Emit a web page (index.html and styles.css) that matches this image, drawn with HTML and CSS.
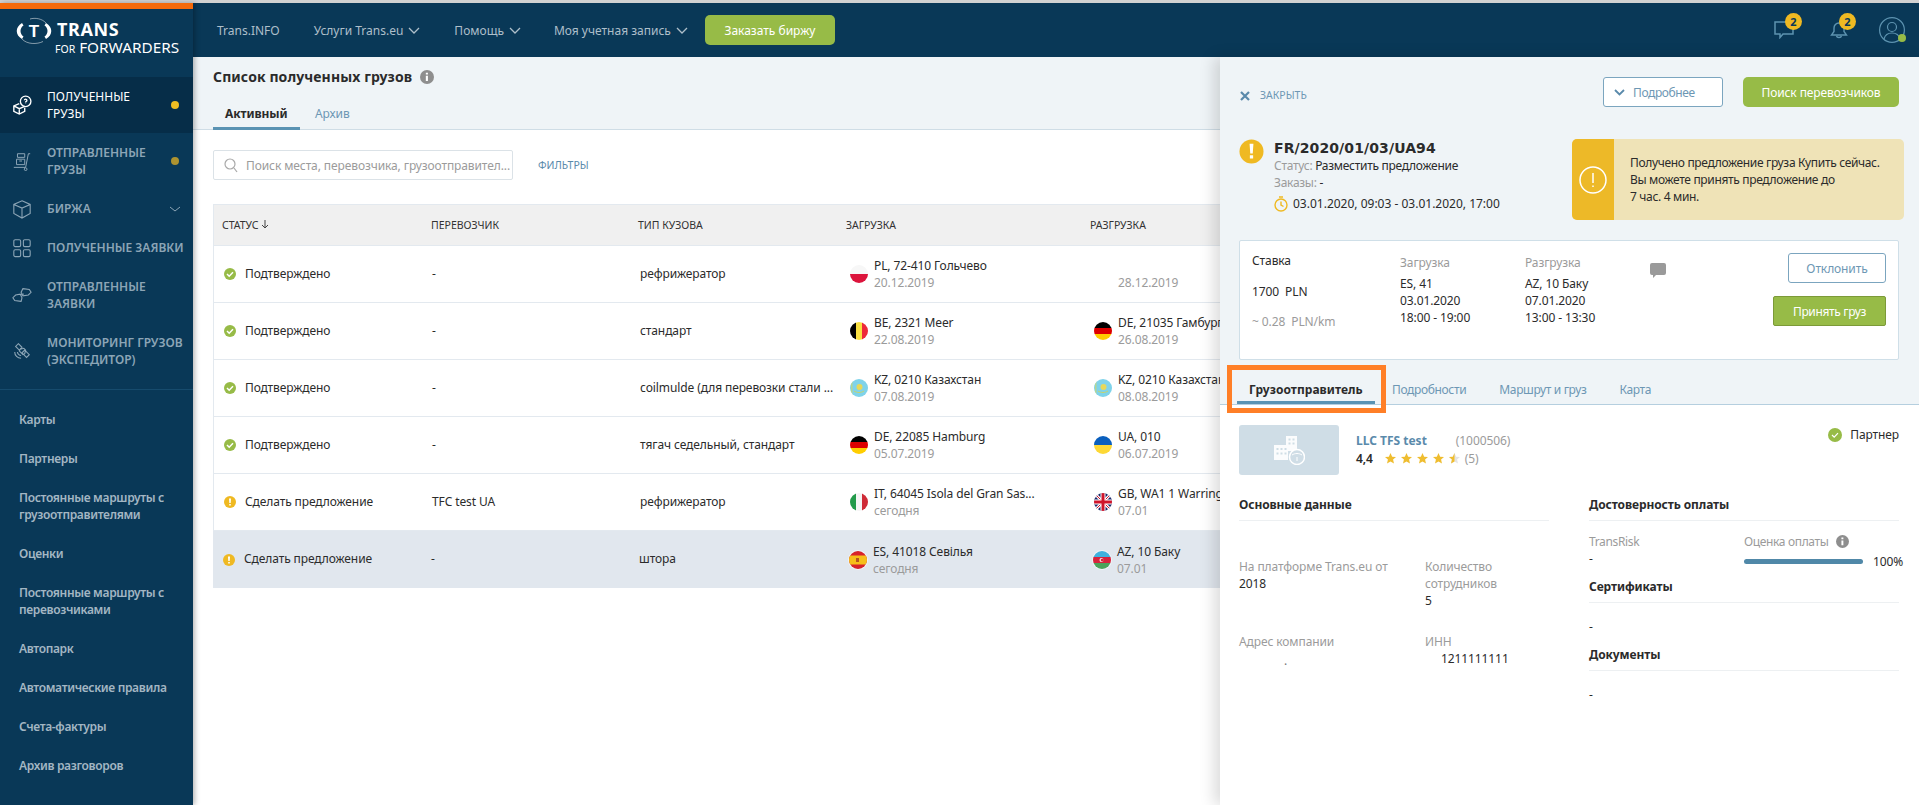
FILE: index.html
```html
<!DOCTYPE html>
<html lang="ru">
<head>
<meta charset="utf-8">
<title>Trans for Forwarders</title>
<link rel="stylesheet" href="styles.css">
</head>
<body>
<div class="app">
  <aside class="sidebar">
    <div class="logo">
      <svg class="logo-mark" width="46" height="40" viewBox="0 0 46 40"><path d="M9 14C2 18 2 26 9 30L10.500 27.500C6.500 25 6.500 19 10.500 16.500Z" fill="#fff"/><path d="M33 14C40 18 40 26 33 30L31.500 27.500C35.500 25 35.500 19 31.500 16.500Z" fill="#fff"/><path d="M9 30C14 35.500 24 35.500 30 32.500M33 14C29 9.500 22 8.500 17 10" fill="none" stroke="#fff" stroke-width=".5"/><text x="21" y="28" text-anchor="middle" class="logo-t">T</text></svg>
      <div class="logo-text"><div class="logo-trans">TRANS</div><div class="logo-for"><span class="logo-small">FOR</span> FORWARDERS</div></div>
    </div>
    <nav class="nav-main">
      <a class="nav-item active"><svg class="nav-ico" viewBox="0 0 22 22" fill="none" stroke="currentColor" stroke-width="1.500"><circle cx="15" cy="7" r="5.800"/><path d="M13.600 5.800a1.400 1.400 0 1 1 1.900 1.500c-.4.200-.6.500-.6 1M14.900 9.500v.4"/><path d="M8 9.500 2 12v6l6 3 6-3v-4M2 12l6 3 6-2.500M8 15v6"/></svg><span>ПОЛУЧЕННЫЕ<br>ГРУЗЫ</span><i class="dot"></i></a>
      <a class="nav-item"><svg class="nav-ico" viewBox="0 0 22 22" fill="none" stroke="currentColor" stroke-width="1.100"><path d="M20 3h-2l-3 15H2M6 3h8v4H6zM5 9h9v6H5zM8 11h3"/><circle cx="15" cy="20" r="1.500"/></svg><span>ОТПРАВЛЕННЫЕ<br>ГРУЗЫ</span><i class="dot dim"></i></a>
      <a class="nav-item single"><svg class="nav-ico" viewBox="0 0 22 22" fill="none" stroke="currentColor" stroke-width="1.200"><path d="M11 2 20 6v10l-9 5-9-5V6zM2 6l9 4 9-4M11 10v11"/></svg><span>БИРЖА</span><svg class="nav-chev" width="12" height="6" viewBox="0 0 12 6" fill="none" stroke="currentColor"><path d="m1 1 5 4 5-4"/></svg></a>
      <a class="nav-item single"><svg class="nav-ico" viewBox="0 0 22 22" fill="none" stroke="currentColor" stroke-width="1.200"><rect x="2" y="2" width="7.500" height="7.500" rx="1.500"/><rect x="12.500" y="2" width="7.500" height="7.500" rx="1.500"/><rect x="2" y="13" width="7.500" height="7.500" rx="1.500"/><rect x="12.500" y="13" width="7.500" height="7.500" rx="1.500"/></svg><span>ПОЛУЧЕННЫЕ ЗАЯВКИ</span></a>
      <a class="nav-item"><svg class="nav-ico" viewBox="0 0 22 22" fill="none" stroke="currentColor" stroke-width="1.200"><path d="m12 4 7 1 2 3-3 3-6 1-2-4zM10 18l-7-1-2-3 3-3 5-1 2 4zM9 11l4-1"/></svg><span>ОТПРАВЛЕННЫЕ<br>ЗАЯВКИ</span></a>
      <a class="nav-item"><svg class="nav-ico" viewBox="0 0 22 22" fill="none" stroke="currentColor" stroke-width="1.200"><path d="m7 3 4 4-3 3-4-4zM14 10l5 5-3 3-5-5zM9 9l4-1 2 2-1 4-2 1-4-4zM3 12c0 4 3 7 7 7M6 12c0 2 2 4 4 4"/></svg><span>МОНИТОРИНГ ГРУЗОВ<br>(ЭКСПЕДИТОР)</span></a>
    </nav>
    <nav class="nav-sub">
      <a>Карты</a>
      <a>Партнеры</a>
      <a>Постоянные маршруты с грузоотправителями</a>
      <a>Оценки</a>
      <a>Постоянные маршруты с перевозчиками</a>
      <a>Автопарк</a>
      <a>Автоматические правила</a>
      <a>Счета-фактуры</a>
      <a>Архив разговоров</a>
    </nav>
  </aside>

  <div class="main">
    <header class="topbar">
      <a class="top-link">Trans.INFO</a>
      <a class="top-link">Услуги Trans.eu <svg class="chev" width="12" height="7" viewBox="0 0 12 7" fill="none" stroke="currentColor" stroke-width="1.300"><path d="m1 1 5 5 5-5"/></svg></a>
      <a class="top-link">Помощь <svg class="chev" width="12" height="7" viewBox="0 0 12 7" fill="none" stroke="currentColor" stroke-width="1.300"><path d="m1 1 5 5 5-5"/></svg></a>
      <a class="top-link">Моя учетная запись <svg class="chev" width="12" height="7" viewBox="0 0 12 7" fill="none" stroke="currentColor" stroke-width="1.300"><path d="m1 1 5 5 5-5"/></svg></a>
      <button class="btn-order">Заказать биржу</button>
      <div class="top-icons">
        <div class="top-ico chat"><svg width="20" height="18" viewBox="0 0 20 18" fill="none" stroke="#5d93b0" stroke-width="1.500"><path d="M1 1h18v12H9l-3 3.500V13H1z"/></svg><b class="badge">2</b></div>
        <div class="top-ico bell"><svg width="18" height="18" viewBox="0 0 18 18" fill="none" stroke="#5d93b0" stroke-width="1.400"><path d="M9 2C6 2 4 4.500 4 7v3.500L1.500 14h15L14 10.500V7c0-2.500-2-5-5-5zM6.500 15c.5 2 4.500 2 5 0"/></svg><b class="badge">2</b></div>
        <div class="avatar"><svg width="26" height="26" viewBox="0 0 26 26" fill="none" stroke="#5d93b0" stroke-width="1.200"><circle cx="13" cy="13" r="12.400"/><circle cx="13" cy="10" r="4.500"/><path d="M5 22c1-4 4-6 8-6s7 2 8 6"/></svg><i class="online"></i></div>
      </div>
    </header>

    <section class="content-head">
      <h1 class="page-title">Список полученных грузов <svg class="info" width="14" height="14" viewBox="0 0 12 12"><circle cx="6" cy="6" r="6" fill="#8e8e8e"/><path d="M5 5h1.800v4.500H5zM5 2.300h1.800v1.600H5z" fill="#fff"/></svg></h1>
      <div class="page-tabs"><a class="page-tab on">Активный</a><a class="page-tab">Архив</a></div>
    </section>

    <section class="list">
      <div class="toolbar">
        <div class="search"><svg width="14" height="15" viewBox="0 0 14 15" fill="none" stroke="#a9a9a9" stroke-width="1.200"><circle cx="6" cy="6" r="5"/><path d="m10 10 3 4"/></svg><span>Поиск места, перевозчика, грузоотправител...</span></div>
        <a class="filters">ФИЛЬТРЫ</a>
      </div>
      <div class="table">
        <div class="tr th"><div>СТАТУС <svg width="8" height="9" viewBox="0 0 8 9" fill="none" stroke="#444"><path d="M4 0v8M1 5l3 3 3-3"/></svg></div><div>ПЕРЕВОЗЧИК</div><div>ТИП КУЗОВА</div><div>ЗАГРУЗКА</div><div>РАЗГРУЗКА</div></div>

        <div class="tr">
          <div class="st"><svg class="st-ico" viewBox="0 0 12 12"><circle cx="6" cy="6" r="6" fill="#97bb47"/><path d="m3 6 2.200 2.200L9 4.200" fill="none" stroke="#fff" stroke-width="1.500"/></svg>Подтверждено</div><div class="cell">-</div><div class="cell">рефрижератор</div>
          <div class="loc"><svg class="flag" viewBox="0 0 18 18"><rect width="18" height="9" fill="#f7f7f7"/><rect y="9" width="18" height="9" fill="#dc143c"/></svg><p>PL, 72-410 Гольчево<small>20.12.2019</small></p></div>
          <div class="loc"><span class="flag none"></span><p>&nbsp;<small>28.12.2019</small></p></div>
        </div>
        <div class="tr">
          <div class="st"><svg class="st-ico" viewBox="0 0 12 12"><circle cx="6" cy="6" r="6" fill="#97bb47"/><path d="m3 6 2.200 2.200L9 4.200" fill="none" stroke="#fff" stroke-width="1.500"/></svg>Подтверждено</div><div class="cell">-</div><div class="cell">стандарт</div>
          <div class="loc"><svg class="flag" viewBox="0 0 18 18"><rect width="6" height="18" fill="#000"/><rect x="6" width="6" height="18" fill="#fae042"/><rect x="12" width="6" height="18" fill="#ed2939"/></svg><p>BE, 2321 Meer<small>22.08.2019</small></p></div>
          <div class="loc"><svg class="flag" viewBox="0 0 18 18"><rect width="18" height="6" fill="#000"/><rect y="6" width="18" height="6" fill="#d00"/><rect y="12" width="18" height="6" fill="#ffce00"/></svg><p>DE, 21035 Гамбург<small>26.08.2019</small></p></div>
        </div>
        <div class="tr">
          <div class="st"><svg class="st-ico" viewBox="0 0 12 12"><circle cx="6" cy="6" r="6" fill="#97bb47"/><path d="m3 6 2.200 2.200L9 4.200" fill="none" stroke="#fff" stroke-width="1.500"/></svg>Подтверждено</div><div class="cell">-</div><div class="cell">coilmulde (для перевозки стали ...</div>
          <div class="loc"><svg class="flag" viewBox="0 0 18 18"><rect width="18" height="18" fill="#7fd3ea"/><circle cx="9.500" cy="8" r="3" fill="#e6d85a"/><path d="M4 12c3 2 7 2 10 0" stroke="#c9d46a" fill="none"/><rect x="1" width="1.500" height="18" fill="#b5d694"/></svg><p>KZ, 0210 Казахстан<small>07.08.2019</small></p></div>
          <div class="loc"><svg class="flag" viewBox="0 0 18 18"><rect width="18" height="18" fill="#7fd3ea"/><circle cx="9.500" cy="8" r="3" fill="#e6d85a"/><path d="M4 12c3 2 7 2 10 0" stroke="#c9d46a" fill="none"/><rect x="1" width="1.500" height="18" fill="#b5d694"/></svg><p>KZ, 0210 Казахстан<small>08.08.2019</small></p></div>
        </div>
        <div class="tr">
          <div class="st"><svg class="st-ico" viewBox="0 0 12 12"><circle cx="6" cy="6" r="6" fill="#97bb47"/><path d="m3 6 2.200 2.200L9 4.200" fill="none" stroke="#fff" stroke-width="1.500"/></svg>Подтверждено</div><div class="cell">-</div><div class="cell">тягач седельный, стандарт</div>
          <div class="loc"><svg class="flag" viewBox="0 0 18 18"><rect width="18" height="6" fill="#000"/><rect y="6" width="18" height="6" fill="#d00"/><rect y="12" width="18" height="6" fill="#ffce00"/></svg><p>DE, 22085 Hamburg<small>05.07.2019</small></p></div>
          <div class="loc"><svg class="flag" viewBox="0 0 18 18"><rect width="18" height="9" fill="#0a5fbd"/><rect y="9" width="18" height="9" fill="#fdd835"/></svg><p>UA, 010<small>06.07.2019</small></p></div>
        </div>
        <div class="tr">
          <div class="st"><svg class="st-ico" viewBox="0 0 12 12"><circle cx="6" cy="6" r="6" fill="#efb922"/><path d="M5 2.500h2L6.700 7H5.300zM5.200 8h1.600v1.600H5.200z" fill="#fff"/></svg>Сделать предложение</div><div class="cell">TFC test UA</div><div class="cell">рефрижератор</div>
          <div class="loc"><svg class="flag" viewBox="0 0 18 18"><rect width="6" height="18" fill="#229a4a"/><rect x="6" width="6" height="18" fill="#f5f5f5"/><rect x="12" width="6" height="18" fill="#cf2b37"/></svg><p>IT, 64045 Isola del Gran Sas...<small>сегодня</small></p></div>
          <div class="loc"><svg class="flag" viewBox="0 0 18 18"><rect width="18" height="18" fill="#1c2a6b"/><path d="M0 0 18 18M18 0 0 18" stroke="#fff" stroke-width="3"/><path d="M0 0 18 18M18 0 0 18" stroke="#cf142b"/><path d="M9 0v18M0 9h18" stroke="#fff" stroke-width="5"/><path d="M9 0v18M0 9h18" stroke="#cf142b" stroke-width="3"/></svg><p>GB, WA1 1 Warrington<small>07.01</small></p></div>
        </div>
        <div class="tr sel">
          <div class="st"><svg class="st-ico" viewBox="0 0 12 12"><circle cx="6" cy="6" r="6" fill="#efb922"/><path d="M5 2.500h2L6.700 7H5.300zM5.200 8h1.600v1.600H5.200z" fill="#fff"/></svg>Сделать предложение</div><div class="cell">-</div><div class="cell">штора</div>
          <div class="loc"><svg class="flag" viewBox="0 0 18 18"><rect width="18" height="18" fill="#d8232a"/><rect y="4.500" width="18" height="9" fill="#f6bf1a"/><rect x="7" y="7" width="3" height="4" fill="#b5561f"/></svg><p>ES, 41018 Севілья<small>сегодня</small></p></div>
          <div class="loc"><svg class="flag" viewBox="0 0 18 18"><rect width="18" height="6" fill="#3fb2de"/><rect y="6" width="18" height="6" fill="#d8233c"/><rect y="12" width="18" height="6" fill="#4ba35a"/><circle cx="8.500" cy="9" r="2" fill="#fff"/><circle cx="9.200" cy="9" r="1.600" fill="#d8233c"/></svg><p>AZ, 10 Баку<small>07.01</small></p></div>
        </div>
      </div>
    </section>

    <aside class="panel">
      <div class="panel-head">
        <div class="panel-actions">
          <a class="close"><svg width="10" height="10" viewBox="0 0 10 10" stroke="#5a8aab" stroke-width="2.200"><path d="m1 1 8 8M9 1 1 9"/></svg>ЗАКРЫТЬ</a>
          <div class="action-btns">
            <button class="btn-more"><svg width="11" height="7" viewBox="0 0 11 7" fill="none" stroke="#5a8aab" stroke-width="1.800"><path d="m1 1 4.500 4.500L10 1"/></svg>Подробнее</button>
            <button class="btn-green wide">Поиск перевозчиков</button>
          </div>
        </div>
        <div class="summary">
          <div class="order">
            <svg class="order-ico" viewBox="0 0 26 26"><circle cx="13" cy="13" r="12.500" fill="#efb922"/><path d="M11 5h4l-.7 10h-2.600zM11.300 17h3.400v3.400h-3.400z" fill="#fff"/></svg>
            <div class="order-info">
              <div class="order-no">FR/2020/01/03/UA94</div>
              <div class="order-row"><span class="mute">Статус:</span> Разместить предложение</div>
              <div class="order-row"><span class="mute">Заказы:</span> -</div>
              <div class="order-time"><svg width="14" height="16" viewBox="0 0 14 16" fill="none" stroke="#efb922" stroke-width="1.400"><circle cx="7" cy="9" r="6"/><path d="M7 5.500V9l2.500 1.500M5 1h4"/></svg>03.01.2020, 09:03 - 03.01.2020, 17:00</div>
            </div>
          </div>
          <div class="notice">
            <div class="notice-ico"><svg width="28" height="28" viewBox="0 0 28 28" fill="none" stroke="#fff" stroke-width="1.500"><circle cx="14" cy="14" r="13"/><path d="M14 7v10M14 19.500v1.500"/></svg></div>
            <p>Получено предложение груза Купить сейчас.<br>Вы можете принять предложение до<br>7 час. 4 мин.</p>
          </div>
        </div>
        <div class="offer">
          <div class="rate"><div>Ставка</div><div class="rate-val">1700&nbsp; PLN</div><div class="mute rate-km">~ 0.28&nbsp; PLN/km</div></div>
          <div class="stop"><div class="mute stop-l">Загрузка</div>ES, 41<br>03.01.2020<br>18:00 - 19:00</div>
          <div class="stop"><div class="mute stop-l">Разгрузка</div>AZ, 10 Баку<br>07.01.2020<br>13:00 - 13:30</div>
          <svg class="comment" width="16" height="15" viewBox="0 0 16 15"><path d="M2 0h12a2 2 0 0 1 2 2v8a2 2 0 0 1-2 2H6l-3 3v-3H2a2 2 0 0 1-2-2V2a2 2 0 0 1 2-2z" fill="#9a9a9a"/></svg>
          <div class="offer-btns"><button class="btn-reject">Отклонить</button><button class="btn-green accept">Принять груз</button></div>
        </div>
        <div class="tabs">
          <a class="tab on">Грузоотправитель</a><a class="tab">Подробности</a><a class="tab">Маршрут и груз</a><a class="tab">Карта</a>
          <span class="highlight"></span>
        </div>
      </div>
      <div class="panel-body">
        <div class="company">
          <div class="co-logo"><svg width="32" height="30" viewBox="0 0 32 30"><path d="M13 1h11v15h-11zM1 10h14v15H1z" fill="#fff" opacity=".9"/><g fill="#cfdde6"><path d="M15.500 3.500h2v2h-2zM19.500 3.500h2v2h-2zM15.500 7.500h2v2h-2zM19.500 7.500h2v2h-2zM3.500 13h2v2h-2zM7.500 13h2v2h-2zM11.500 13h2v2h-2zM3.500 17.500h2v2h-2zM7.500 17.500h2v2h-2zM11.500 17.500h2v2h-2z"/></g><circle cx="24" cy="22" r="7.500" fill="#cfdde6" stroke="#fff" stroke-width="1.500"/><path d="M19 20c3-2 7-2 10 0M24 22v4" stroke="#fff" fill="none"/></svg></div>
          <div class="co-info">
            <div class="co-name"><b>LLC TFS test</b><span>(1000506)</span></div>
            <div class="co-rate"><b>4,4</b><span class="stars"><svg viewBox="0 0 12 12"><path d="m6 0 1.800 4 4.200.4-3.200 2.800 1 4.300L6 9.200 2.200 11.500l1-4.300L0 4.400 4.200 4z"/></svg><svg viewBox="0 0 12 12"><path d="m6 0 1.800 4 4.200.4-3.200 2.800 1 4.300L6 9.200 2.200 11.500l1-4.300L0 4.400 4.200 4z"/></svg><svg viewBox="0 0 12 12"><path d="m6 0 1.800 4 4.200.4-3.200 2.800 1 4.300L6 9.200 2.200 11.500l1-4.300L0 4.400 4.200 4z"/></svg><svg viewBox="0 0 12 12"><path d="m6 0 1.800 4 4.200.4-3.200 2.800 1 4.300L6 9.200 2.200 11.500l1-4.300L0 4.400 4.200 4z"/></svg><svg viewBox="0 0 12 12"><path d="m6 0 1.800 4 4.200.4-3.200 2.800 1 4.300L6 9.200 2.200 11.500l1-4.300L0 4.400 4.200 4z" fill="#e4e4e4"/><path d="M6 0v9.200L2.200 11.500l1-4.300L0 4.400 4.200 4z"/></svg></span><span class="mute">(5)</span></div>
          </div>
          <div class="partner"><svg width="14" height="14" viewBox="0 0 14 14"><circle cx="7" cy="7" r="7" fill="#97bb47"/><path d="m4 7 2.200 2.200L10 5.200" fill="none" stroke="#fff" stroke-width="1.200"/></svg>Партнер</div>
        </div>
        <div class="cols">
          <div class="col">
            <h3>Основные данные</h3>
            <div class="facts">
              <div><div class="mute">На платформе Trans.eu от</div>2018</div>
              <div><div class="mute">Количество сотрудников</div>5</div>
              <div><div class="mute">Адрес компании</div><div class="addr">.</div></div>
              <div><div class="mute">ИНН</div><div class="inn">1211111111</div></div>
            </div>
          </div>
          <div class="col">
            <h3>Достоверность оплаты</h3>
            <div class="risk">
              <div><div class="mute">TransRisk</div>-</div>
              <div><div class="mute">Оценка оплаты <svg class="info" width="13" height="13" viewBox="0 0 12 12"><circle cx="6" cy="6" r="6" fill="#8e8e8e"/><path d="M5 5h1.800v4.500H5zM5 2.300h1.800v1.600H5z" fill="#fff"/></svg></div><div class="meter"><span class="meter-bar"></span><span class="meter-val">100%</span></div></div>
            </div>
            <h3 class="next">Сертификаты</h3>
            <div class="plain">-</div>
            <h3 class="next">Документы</h3>
            <div class="plain">-</div>
          </div>
        </div>
      </div>
    </aside>
  </div>
</div>
</body>
</html>
```
FILE: styles.css
```css
* { box-sizing: border-box; }
html, body { margin: 0; height: 100%; overflow: hidden; }
body { font: 12px/17px "Noto Sans", "Liberation Sans", sans-serif; letter-spacing: -.1px; color: #2b2b2b; background: #fff; }
button { font: inherit; letter-spacing: inherit; cursor: pointer; }
p, h1, h3 { margin: 0; }
svg { flex: none; }
a { display: block; }

.app { display: flex; height: 805px; border-top: 3px solid #d2d2d2; }

/* sidebar */
.sidebar { width: 193px; flex: none; background: #093857; border-top: 6px solid #f56a0a; position: relative; z-index: 2; box-shadow: 2px 0 5px rgba(0,0,0,.28); }
.logo { height: 68px; display: flex; padding: 0 0 0 13px; }
.logo-mark { margin-right: -2px; }
.logo-t { font: bold 17px "Liberation Sans", sans-serif; fill: #fff; }
.logo-text { padding-top: 10px; color: #fff; letter-spacing: 0; }
.logo-trans { font: bold 18px/20px "Noto Sans", sans-serif; letter-spacing: .6px; }
.logo-for { font: 15.300px/16px "Noto Sans", sans-serif; white-space: nowrap; margin-left: -2px; }
.logo-small { font-size: 10.500px; }
.nav-main { border-bottom: 1px solid #164b6d; padding-bottom: 10px; }
.nav-item { position: relative; display: flex; align-items: center; padding: 11px 0 11px 47px; color: #8ca5b6; font-weight: 600; white-space: nowrap; letter-spacing: 0; }
.nav-item.active { background: #062d48; color: #fff; font-weight: 400; }
.nav-ico { position: absolute; left: 12px; top: 50%; margin-top: -10px; width: 20px; height: 20px; }
.dot { position: absolute; left: 171px; top: 50%; margin-top: -4px; width: 8px; height: 8px; border-radius: 50%; background: #efbd22; }
.dot.dim { background: #ad9330; }
.nav-chev { position: absolute; left: 169px; top: 17px; }
.nav-sub { padding-top: 10px; }
.nav-sub a { padding: 11px 0 11px 19px; color: #a3b6c3; font-weight: 600; letter-spacing: -.33px; }

/* top bar */
.main { flex: 1; min-width: 0; position: relative; display: flex; flex-direction: column; }
.topbar { height: 54px; flex: none; background: #093857; display: flex; align-items: center; padding-left: 24px; color: #aebfca; letter-spacing: 0; }
.top-link { margin-right: 34px; white-space: nowrap; display: flex; align-items: center; gap: 5px; }
.top-link:nth-child(4) { margin-left: -1px; }
.chev { margin-top: 1px; }
.btn-order { width: 130px; height: 30px; background: #97bb47; color: #fff; border: 0; border-radius: 5px; margin-left: -17px; }
.top-icons { margin-left: auto; display: flex; align-items: center; padding-right: 14px; }
.top-ico { position: relative; display: flex; }
.top-ico.chat { margin-right: 36px; }
.top-ico.bell { margin-right: 31px; }
.badge { position: absolute; right: -8px; top: -8px; width: 17px; height: 17px; border-radius: 50%; background: #efb922; color: #093857; font-size: 11px; line-height: 17px; text-align: center; }
.avatar { position: relative; display: flex; }
.online { position: absolute; right: -1px; bottom: 1px; width: 8px; height: 8px; border-radius: 50%; background: #97bb47; }

/* page header */
.content-head { height: 73px; flex: none; background: #eff4f7; border-bottom: 1px solid #cfdde6; padding: 11px 0 0 20px; }
.page-title { font-size: 14px; line-height: 18px; font-weight: 700; letter-spacing: .1px; color: #2b2b2b; display: flex; align-items: center; gap: 8px; }
.page-tabs { display: flex; margin-top: 19px; }
.page-tab { height: 25px; padding: 0 12px; color: #6d97b4; }
.page-tab.on { width: 87px; font-weight: 700; color: #2b2b2b; border-bottom: 3px solid #5a93b3; margin-right: 3px; }

/* list */
.list { flex: 1; padding: 20px 0 0 20px; overflow: hidden; }
.toolbar { display: flex; align-items: center; height: 30px; }
.search { width: 300px; height: 30px; border: 1px solid #dbe2e7; border-radius: 2px; display: flex; align-items: center; gap: 8px; padding-left: 10px; color: #9b9b9b; white-space: nowrap; overflow: hidden; }
.filters { margin-left: 25px; color: #5a8aab; font-size: 10.500px; letter-spacing: 0; }
.table { margin-top: 24px; }
.tr { display: grid; grid-template-columns: 208px 208px 206px 244px 400px; height: 57px; align-items: center; border-left: 1px solid #e3e9ef; border-bottom: 1px solid #e3e9ef; white-space: nowrap; }
.tr > div { overflow: hidden; }
.th { height: 42px; background: #f0f0f0; border-top: 1px solid #e3e9ef; font-size: 10.500px; color: #333; letter-spacing: 0; }
.th > div { padding-left: 8px; }
.th > div:nth-child(2) { padding-left: 9px; }
.th > div:nth-child(n+4) { padding-left: 10px; }
.sel { background: #e1e7ee; border: 0; }
.st { display: flex; align-items: center; padding: 0 0 2px 10px; gap: 9px; }
.st-ico { width: 12px; height: 12px; margin-top: 2px; }
.cell { padding: 0 0 2px 10px; overflow: hidden; text-overflow: ellipsis; }
.loc { display: flex; align-items: center; padding-left: 14px; }
.flag { width: 18px; height: 18px; border-radius: 50%; margin-right: 6px; box-shadow: 0 0 0 1px rgba(255,255,255,.55); }
.flag.none { box-shadow: none; }
.loc small { display: block; font-size: 12px; color: #9b9b9b; }

/* side panel */
.panel { position: absolute; z-index: 3; top: 54px; bottom: 0; right: 0; width: 699px; background: #fff; box-shadow: -6px 0 14px rgba(0,0,0,.14); }
.panel-head { height: 348px; background: #eff4f7; border-bottom: 1px solid #b5cfdf; padding: 20px 20px 0 19px; position: relative; }
.panel-actions { display: flex; justify-content: space-between; align-items: center; height: 30px; }
.close { display: flex; align-items: center; gap: 10px; color: #6d97b4; font-size: 10.500px; letter-spacing: 0; padding: 7px 0 0 1px; }
.action-btns { display: flex; gap: 20px; }
.btn-more { width: 120px; height: 30px; background: #fff; border: 1px solid #7ba5bf; border-radius: 3px; color: #6d97b4; display: flex; align-items: center; gap: 8px; padding: 0 0 0 10px; letter-spacing: -.4px; }
.btn-green { background: #97bb47; color: #fff; border: 0; border-radius: 5px; height: 30px; }
.btn-green.wide { width: 156px; }
.summary { display: flex; justify-content: space-between; margin: 32px -5px 20px 0; height: 81px; }
.order { display: flex; gap: 10px; }
.order-ico { width: 25px; height: 25px; }
.order-no { font: bold 14px/18px "DejaVu Sans", sans-serif; letter-spacing: .1px; }
.order-row { letter-spacing: -.28px; }
.mute { color: #9b9b9b; }
.order-time { display: flex; align-items: center; gap: 5px; margin-top: 4px; letter-spacing: 0; }
.notice { width: 332px; display: flex; background: #efe3b7; border-radius: 5px; overflow: hidden; }
.notice-ico { width: 42px; background: #edb928; display: flex; align-items: center; justify-content: center; }
.notice p { padding: 15px 0 0 16px; white-space: nowrap; letter-spacing: -.33px; }
.offer { height: 120px; background: #fff; border: 1px solid #cfdfe8; border-radius: 2px; display: flex; padding: 11px 12px 0 12px; position: relative; }
.rate { width: 148px; }
.rate-val { margin-top: 14px; }
.rate-km { margin-top: 13px; }
.stop { width: 125px; padding-top: 2px; }
.stop-l { margin-bottom: 4px; }
.comment { margin-top: 11px; }
.offer-btns { margin-left: auto; display: flex; flex-direction: column; align-items: flex-end; gap: 13px; margin-top: 1px; }
.btn-reject { width: 98px; height: 30px; background: #fff; border: 1px solid #7ba5bf; border-radius: 3px; color: #6d97b4; }
.accept { width: 113px; border-radius: 2px; border: 1px solid #7c9a38; letter-spacing: -.35px; }
.tabs { position: absolute; left: 17px; bottom: 0; display: flex; height: 38px; }
.tab { padding: 15px 12px 0; color: #6d97b4; margin-right: 9px; white-space: nowrap; letter-spacing: -.35px; }
.tab.on { font-weight: 700; letter-spacing: .05px; color: #2b2b2b; width: 138px; border-bottom: 3px solid #5a93b3; height: 38px; margin-right: 5px; }
.highlight { position: absolute; left: -10px; top: -1px; width: 159px; height: 48px; border: 5px solid #ff7f27; pointer-events: none; }

.panel-body { padding: 20px 20px 0 19px; }
.company { display: flex; height: 50px; }
.co-logo { width: 100px; height: 50px; background: #cfdde6; border-radius: 3px; display: flex; align-items: center; justify-content: center; margin-right: 17px; }
.co-info { padding-top: 7px; }
.co-name { display: flex; gap: 29px; }
.co-name b { color: #5a8aab; letter-spacing: 0; }
.co-name span { color: #9b9b9b; }
.co-rate { display: flex; align-items: center; margin-top: 1px; }
.co-rate b { font-weight: 600; margin-right: 12px; }
.stars { display: flex; gap: 5px; margin-right: 5px; }
.stars svg { width: 11px; height: 11px; fill: #efbd30; }
.partner { margin-left: auto; display: flex; align-items: center; gap: 8px; height: 17px; margin-top: 1px; }
.cols { display: flex; gap: 40px; margin-top: 21px; }
.col { width: 310px; }
h3 { font-size: 12px; line-height: 17px; font-weight: 700; padding-bottom: 7px; border-bottom: 1px solid #edf0f2; }
.next { margin-top: 8px; }
.facts { display: grid; grid-template-columns: 186px 124px; row-gap: 24px; margin-top: 37px; }
.addr { padding-left: 45px; margin-top: 2px; color: #777; }
.inn { padding-left: 16px; }
.risk { display: grid; grid-template-columns: 155px 155px; margin-top: 12px; }
.risk .mute { display: flex; align-items: center; gap: 7px; letter-spacing: -.35px; }
.meter { display: flex; align-items: center; gap: 10px; white-space: nowrap; margin-top: 2px; }
.meter-bar { width: 119px; height: 5px; flex: none; background: #5088a8; border-radius: 3px; }
.meter-val { margin-top: 1px; }
.plain { margin-top: 15px; margin-bottom: 11px; }
.plain + .next { margin-top: 0; }
```
